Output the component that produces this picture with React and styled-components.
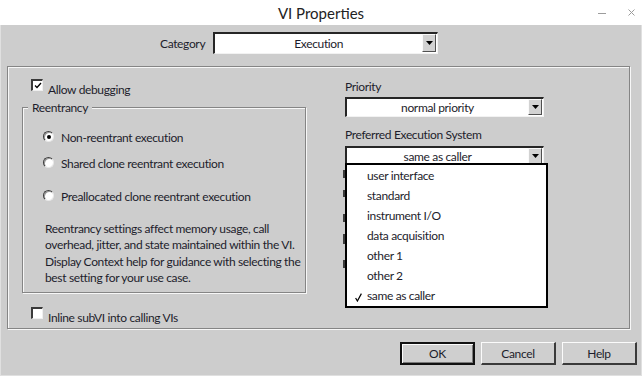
import React from 'react'
import styled, { createGlobalStyle } from 'styled-components'

const GlobalStyle = createGlobalStyle`
  html, body { margin: 0; padding: 0; }
  body {
    width: 642px; height: 376px; overflow: hidden; background: #cdcdcd;
    font-family: Lato, "Noto Sans", sans-serif; font-size: 12px;
    letter-spacing: -0.35px; color: #1d1d2c;
  }
`

const Window = styled.div`
  width: 642px; height: 376px; box-sizing: border-box;
  display: flex; flex-direction: column; background: #cdcdcd;
`

const TitleBar = styled.div`
  height: 25px; flex-shrink: 0; background: #fff;
  display: grid; grid-template-columns: 1fr auto 1fr; align-items: center;
`

const Title = styled.div`
  grid-column: 2; font-size: 15px; letter-spacing: 0; color: #222;
`

const WinControls = styled.div`
  justify-self: end; display: flex; align-items: center; gap: 22px; padding-right: 7px;
`

const Body = styled.div`
  flex: 1; display: flex; flex-direction: column;
  border: 1px solid #e0e0e0; border-top: none;
`

const CategoryRow = styled.div`
  display: flex; align-items: center; gap: 8px;
  margin-top: 7px; padding-left: 159px; height: 22px;
`

const SelectBox = styled.div`
  position: relative;
  width: ${p => p.$w}px; height: ${p => p.$h}px; box-sizing: border-box;
  display: flex; background: #fff;
  border-style: solid; border-width: 2px 1px 1px 2px;
  border-color: #262626 #f2f2f2 #f2f2f2 #262626;
`

const SelectValue = styled.div`
  flex: 1; text-align: center; line-height: ${p => p.$h - 3}px; white-space: nowrap;
`

const ArrowBtn = styled.div`
  width: 14px; box-sizing: border-box; margin: 0 1px 1px 0;
  display: flex; align-items: center; justify-content: center;
  background: #d2d2d2;
  border-style: solid; border-width: 1px;
  border-color: #fafafa #505050 #505050 #fafafa;
`

const Panel = styled.div`
  margin: 12px 0 0 6px; width: 623px; height: 263px; box-sizing: border-box;
  border: 1px solid #858585;
  box-shadow: inset 1px 1px 0 #f7f7f7, 1px 1px 0 #f7f7f7;
  display: flex;
`

const LeftCol = styled.div`
  width: 337px; padding: 12px 0 0 14px; box-sizing: border-box;
  display: flex; flex-direction: column;
`

const CheckRow = styled.label`
  display: flex; align-items: flex-start; gap: 5px;
  margin: ${p => p.$mt || 0}px 0 0 9px; line-height: 16px; white-space: nowrap;
`

const RowText = styled.span`
  padding-top: 3px;
`

const CheckBox = styled.span`
  width: 12px; height: 12px; box-sizing: border-box; flex-shrink: 0;
  display: flex; align-items: center; justify-content: center; background: #fff;
  border-style: solid; border-width: 2px 1px 1px 2px;
  border-color: #3a3a3a #efefef #efefef #3a3a3a;
`

const Group = styled.section`
  position: relative;
  margin-top: 9px; padding-left: 20px; width: 284px; height: 186px;
  box-sizing: border-box; display: flex; flex-direction: column;
  border: 1px solid #858585;
  box-shadow: inset 1px 1px 0 #f7f7f7, 1px 1px 0 #f7f7f7;
`

const GroupTitle = styled.span`
  position: absolute; top: -8px; left: 5px;
  padding: 0 4px; line-height: 16px; background: #cdcdcd;
`

const RadioRow = styled.label`
  display: flex; align-items: flex-start; gap: 7px;
  margin-top: ${p => p.$mt}px; line-height: 16px; white-space: nowrap;
`

const Radio = styled.span`
  width: 11px; height: 11px; box-sizing: border-box; margin-top: 4px; flex-shrink: 0;
  border-radius: 50%; background: #fff;
  border: 1px solid; border-color: #3c3c3c #e8e8e8 #e8e8e8 #3c3c3c;
  box-shadow: inset 1px 1px 0 #9a9a9a;
  display: flex; align-items: center; justify-content: center;
  &::after {
    content: ''; width: 4px; height: 4px; border-radius: 50%;
    background: ${p => (p.$on ? '#000' : 'transparent')};
  }
`

const Note = styled.p`
  margin: 16px 0 0 2px; line-height: 16.3px; white-space: nowrap;
`

const RightCol = styled.div`
  flex: 1; padding-top: 12px; display: flex; flex-direction: column;
`

const FieldLabel = styled.div`
  line-height: 16px; margin-top: ${p => p.$mt || 0}px; white-space: nowrap;
`

const FieldSelect = styled.div`
  position: relative; margin-top: ${p => p.$mt}px;
`

const Menu = styled.ul`
  position: absolute; top: 17px; left: 0; z-index: 2;
  width: 203px; box-sizing: border-box; margin: 0; padding: 1px 0 0; list-style: none;
  background: #fff; border: 2px solid #000;
`

const MenuItem = styled.li`
  height: 20px; line-height: 20px; display: grid; grid-template-columns: 20px 1fr;
  align-items: center; white-space: nowrap;
`

const Tick = styled.span`
  display: flex; justify-content: flex-end; padding-right: 5px; padding-top: 2px;
`

const Behind = styled.div`
  margin-top: ${p => p.$mt}px; width: 2px; height: ${p => p.$h}px; background: #3a3a3a;
  margin-left: -2px;
`

const ButtonRow = styled.div`
  display: flex; justify-content: flex-end; gap: 6px;
  margin-top: 13px; padding-right: 4px;
`

const Button = styled.button`
  width: 75px; height: 23px; box-sizing: border-box; padding: 0;
  font: inherit; letter-spacing: inherit; color: #1d1d2c; background: #cfcfcf;
  border-style: solid;
  ${p => p.$default
    ? `border-width: 2px; border-color: #111;
       box-shadow: inset 1px 1px 0 #fbfbfb, inset -1px -1px 0 #7a7a7a;`
    : `border-width: 1px 2px 2px 1px; border-color: #fbfbfb #3a3a3a #3a3a3a #fbfbfb;`}
`

const Arrow = () => (
  <svg width="7" height="4" viewBox="0 0 7 4"><polygon points="0,0 7,0 3.5,4" fill="#000" /></svg>
)

const Select = ({ w, h, value }) => (
  <SelectBox $w={w} $h={h}>
    <SelectValue $h={h}>{value}</SelectValue>
    <ArrowBtn><Arrow /></ArrowBtn>
  </SelectBox>
)

const CheckMark = () => (
  <svg width="8" height="7" viewBox="0 0 8 7">
    <path d="M1 3.5 L3 5.5 L7 1" stroke="#000" strokeWidth="1.3" fill="none" />
  </svg>
)

const systems = ['user interface', 'standard', 'instrument I/O', 'data acquisition', 'other 1', 'other 2', 'same as caller']

export default function App() {
  return (
    <Window>
      <GlobalStyle />
      <TitleBar>
        <Title>VI Properties</Title>
        <WinControls>
          <svg width="8" height="8" viewBox="0 0 8 8"><line x1="0" y1="4.5" x2="8" y2="4.5" stroke="#9c9c9c" /></svg>
          <svg width="7" height="7" viewBox="0 0 7 7">
            <path d="M0.5 0.5 L6.5 6.5 M6.5 0.5 L0.5 6.5" stroke="#9c9c9c" />
          </svg>
        </WinControls>
      </TitleBar>
      <Body>
        <CategoryRow>
          <span>Category</span>
          <Select w={225} h={22} value="Execution" />
        </CategoryRow>
        <Panel>
          <LeftCol>
            <CheckRow>
              <CheckBox><CheckMark /></CheckBox>
              <RowText>Allow debugging</RowText>
            </CheckRow>
            <Group>
              <GroupTitle>Reentrancy</GroupTitle>
              <RadioRow $mt={19}><Radio $on /><RowText>Non-reentrant execution</RowText></RadioRow>
              <RadioRow $mt={7}><Radio /><RowText>Shared clone reentrant execution</RowText></RadioRow>
              <RadioRow $mt={14}><Radio /><RowText>Preallocated clone reentrant execution</RowText></RadioRow>
              <Note>
                Reentrancy settings affect memory usage, call<br />
                overhead, jitter, and state maintained within the VI.<br />
                Display Context help for guidance with selecting the<br />
                best setting for your use case.
              </Note>
            </Group>
            <CheckRow $mt={14}>
              <CheckBox />
              <RowText>Inline subVI into calling VIs</RowText>
            </CheckRow>
          </LeftCol>
          <RightCol>
            <FieldLabel>Priority</FieldLabel>
            <FieldSelect $mt={2}>
              <Select w={199} h={20} value="normal priority" />
            </FieldSelect>
            <FieldLabel $mt={10}>Preferred Execution System</FieldLabel>
            <FieldSelect $mt={3}>
              <Select w={199} h={20} value="same as caller" />
              <Menu>
                {systems.map(s => (
                  <MenuItem key={s}>
                    <Tick>
                      {s === 'same as caller' && (
                        <svg width="7" height="9" viewBox="0 0 7 9">
                          <path d="M0.6 5 L2.4 8 L6.4 0.6" stroke="#000" strokeWidth="1.2" fill="none" />
                        </svg>
                      )}
                    </Tick>
                    <span>{s}</span>
                  </MenuItem>
                ))}
              </Menu>
            </FieldSelect>
            <Behind $mt={4} $h={8} />
            <Behind $mt={12} $h={7} />
            <Behind $mt={17} $h={8} />
            <Behind $mt={12} $h={10} />
            <Behind $mt={16} $h={8} />
          </RightCol>
        </Panel>
        <ButtonRow>
          <Button $default>OK</Button>
          <Button>Cancel</Button>
          <Button>Help</Button>
        </ButtonRow>
      </Body>
    </Window>
  )
}
